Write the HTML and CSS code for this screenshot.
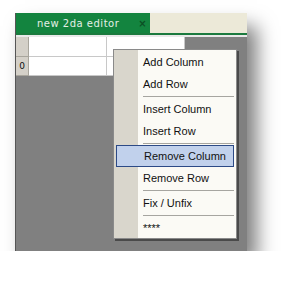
FILE: index.html
```html
<!DOCTYPE html>
<html>
<head>
<meta charset="utf-8">
<link rel="stylesheet" href="styles.css">
</head>
<body>
<div class="panel">
  <div class="tabbar">
    <div class="tab"><span class="tab-title">new 2da editor</span><span class="tab-close">×</span></div>
  </div>
  <div class="tabline"></div>
  <div class="tabgap"></div>
  <div class="grid">
    <div class="row">
      <div class="hcell"></div>
      <div class="cell"></div>
      <div class="cell"></div>
    </div>
    <div class="row">
      <div class="hcell">0</div>
      <div class="cell"></div>
      <div class="cell"></div>
    </div>
  </div>
  <div class="menu">
    <div class="item">Add Column</div>
    <div class="item">Add Row</div>
    <div class="sep"></div>
    <div class="item">Insert Column</div>
    <div class="item">Insert Row</div>
    <div class="sep"></div>
    <div class="item active">Remove Column</div>
    <div class="item">Remove Row</div>
    <div class="sep"></div>
    <div class="item">Fix / Unfix</div>
    <div class="sep"></div>
    <div class="item">****</div>
  </div>
</div>
</body>
</html>
```
FILE: styles.css
```css
html, body {
  margin: 0;
  padding: 0;
  background: #ffffff;
}
body {
  padding: 13px 0 0 15px;
}
.panel {
  position: relative;
  width: 232px;
  height: 238px;
  background: #808080;
  border-left: 1px solid #555555;
  box-sizing: border-box;
  box-shadow: 10px 13px 18px rgba(0, 0, 0, 0.5);
}
.tabbar {
  height: 20px;
  background: #ece9d8;
  display: flex;
}
.tab {
  width: 134px;
  background: #13843f;
  display: flex;
  align-items: center;
  font-family: "DejaVu Sans", sans-serif;
  font-size: 10px;
  letter-spacing: 0.5px;
  color: #e4efe6;
}
.tab-title {
  margin-left: 21px;
  padding-top: 1px;
}
.tab-close {
  margin-left: 19px;
  color: #0b4f24;
  font-size: 10px;
  font-weight: bold;
}
.tabline {
  height: 2px;
  background: #1b7a3e;
}
.tabgap {
  height: 2px;
  background: #e9e9e9;
}
.grid {
  display: flex;
  flex-direction: column;
}
.row {
  display: flex;
}
.row:first-child .hcell, .row:first-child .cell {
  height: 20px;
}
.hcell {
  width: 13px;
  height: 19px;
  background: #d4d0c8;
  border-right: 1px solid #a8a59c;
  border-bottom: 1px solid #a8a59c;
  box-sizing: border-box;
  font-family: "DejaVu Sans", sans-serif;
  font-size: 9px;
  color: #111;
  display: flex;
  align-items: center;
  justify-content: center;
}
.cell {
  width: 78px;
  height: 19px;
  background: #ffffff;
  border-right: 1px solid #c8c8c8;
  border-bottom: 1px solid #c8c8c8;
  box-sizing: border-box;
}
.menu {
  position: absolute;
  left: 97px;
  top: 36px;
  width: 124px;
  height: 190px;
  box-sizing: border-box;
  border: 1px solid #8a8a8a;
  padding: 1px;
  background: linear-gradient(to right, #d9d6cc 0, #d9d6cc 24px, #fbfaf5 24px);
  box-shadow: 2px 2px 0 #4a4a4a;
  font-family: "Liberation Sans", Arial, sans-serif;
  font-size: 11px;
  color: #111;
}
.item {
  height: 22px;
  line-height: 22px;
  padding-left: 28px;
  box-sizing: border-box;
}
.item.active {
  background: #c1d1ec;
  border: 1px solid #2c4a86;
  line-height: 20px;
  padding-left: 27px;
  margin: 0 1px;
}
.sep {
  height: 3px;
  margin-left: 28px;
  margin-right: 1px;
  display: flex;
  align-items: center;
}
.sep::after {
  content: "";
  display: block;
  width: 100%;
  height: 1px;
  background: #a6a5a0;
}
```
